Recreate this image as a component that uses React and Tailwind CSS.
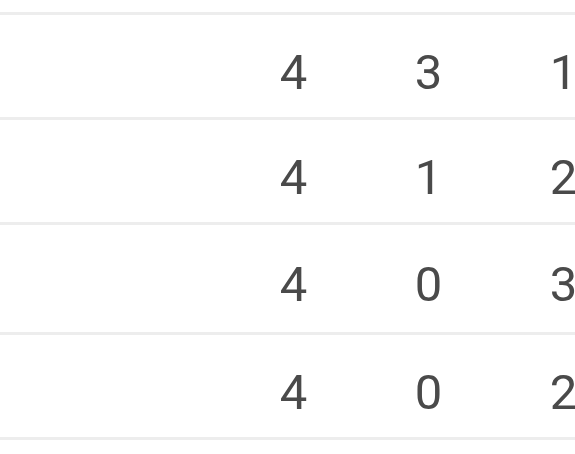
const rows = [
  { h: "h-[105px]", cells: ["4", "3", "1"] },
  { h: "h-[105px]", cells: ["4", "1", "2"] },
  { h: "h-[110px]", cells: ["4", "0", "3"] },
  { h: "h-[105px]", cells: ["4", "0", "2"] },
];

export default function App() {
  return (
    <div className="w-[575px] h-[454px] overflow-hidden bg-white font-['Roboto',sans-serif] text-[#4a4a4a]">
      <div className="pt-[12px] w-[640px]">
        {rows.map((row, i) => (
          <div
            key={i}
            className={`flex items-center pt-[12px] border-t-[3px] border-[#ededed] ${row.h}`}
          >
            <div className="w-[226px] shrink-0" />
            {row.cells.map((c, j) => (
              <div key={j} className="w-[135px] shrink-0 text-center text-[49px] leading-[49px]">
                {c}
              </div>
            ))}
          </div>
        ))}
        <div className="border-t-[3px] border-[#ededed] h-[20px]" />
      </div>
    </div>
  );
}
